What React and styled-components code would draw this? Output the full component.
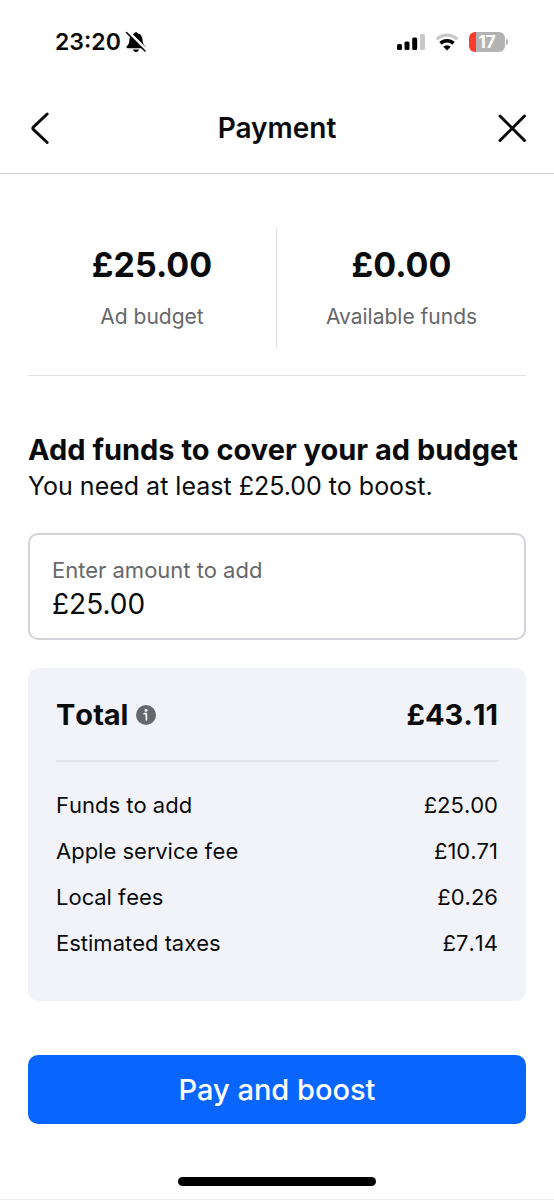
import { useState } from "react";
import styled, { createGlobalStyle } from "styled-components";

const GlobalStyle = createGlobalStyle`
  * {
    box-sizing: border-box;
  }
  body {
    margin: 0;
    background-color: #fff;
    color: #0a0b0c;
    font-family: Inter, "Liberation Sans", sans-serif;
  }
`;

const Container = styled.div`
  min-height: 100vh;
  display: flex;
  flex-direction: column;
  border-bottom: 1px solid #ececee;
`;

const StatusBar = styled.div`
  height: 83px;
  padding: 0 46px 0 55px;
  display: flex;
  align-items: center;
  justify-content: space-between;
`;

const StatusGroup = styled.div`
  display: flex;
  align-items: center;
  gap: ${(props) => props.gap};
`;

const Time = styled.span`
  font-size: 23px;
  font-weight: 600;
  line-height: 28px;
`;

const Battery = styled.div`
  display: flex;
  align-items: center;
  gap: 1px;
`;

const BatteryBody = styled.div`
  width: 36px;
  height: 20px;
  border-radius: 6px;
  background: linear-gradient(to right, #fb3b30 7px, #b3b3b3 7px);
  color: white;
  font-size: 17px;
  font-weight: 700;
  line-height: 20px;
  text-align: center;
`;

const BatteryCap = styled.div`
  width: 2px;
  height: 6px;
  border-radius: 0 2px 2px 0;
  background-color: #b3b3b3;
`;

const Header = styled.header`
  height: 91px;
  padding: 0 20px;
  display: flex;
  align-items: center;
  justify-content: space-between;
  border-bottom: 1px solid #cfd0d2;
`;

const IconButton = styled.button`
  width: 44px;
  height: 44px;
  padding: 0;
  display: flex;
  align-items: center;
  justify-content: center;
  border: none;
  background: none;
  color: inherit;
  cursor: pointer;
`;

const Title = styled.h1`
  margin: 0;
  font-size: 28px;
  font-weight: 600;
  line-height: 36px;
`;

const Wrapper = styled.main`
  flex: 1;
  padding: 54px 28px 0;
`;

const Balances = styled.div`
  display: grid;
  grid-template-columns: 1fr 1fr;
  padding-bottom: 27px;
  border-bottom: 1px solid #e0e1e3;
`;

const Balance = styled.div`
  height: 120px;
  display: flex;
  flex-direction: column;
  align-items: center;
  justify-content: center;
  gap: 18px;

  &:first-child {
    border-right: 1px solid #dedfe2;
  }
`;

const BalanceValue = styled.span`
  font-size: 34px;
  font-weight: 700;
  line-height: 40px;
`;

const BalanceLabel = styled.span`
  color: #65676b;
  font-size: 21px;
  line-height: 28px;
`;

const SectionTitle = styled.h2`
  margin: 56px 0 0;
  font-size: 29px;
  font-weight: 700;
  line-height: 36px;
`;

const SectionText = styled.p`
  margin: 0;
  font-size: 25px;
  line-height: 36px;
`;

const Field = styled.div`
  margin-top: 29px;
  padding: 21px 22px 16px;
  display: flex;
  flex-direction: column;
  gap: 2px;
  border: 2px solid #d2d3da;
  border-radius: 10px;
`;

const FieldLabel = styled.label`
  color: #65676b;
  font-size: 22px;
  line-height: 28px;
`;

const FieldInput = styled.input`
  width: 100%;
  height: 36px;
  padding: 0;
  border: none;
  outline: none;
  background: none;
  color: inherit;
  font-family: inherit;
  font-size: 28px;
`;

const Summary = styled.section`
  margin-top: 28px;
  padding: 29px 28px 35px;
  border-radius: 10px;
  background-color: #f2f3f8;
  font-kerning: none;
`;

const SummaryTotal = styled.div`
  padding-bottom: 27px;
  display: flex;
  align-items: center;
  justify-content: space-between;
  border-bottom: 2px solid #e3e5ea;
`;

const TotalLabel = styled.div`
  display: flex;
  align-items: center;
  gap: 8px;
`;

const TotalText = styled.span`
  font-size: 29px;
  font-weight: 700;
  line-height: 36px;
`;

const InfoButton = styled.button`
  padding: 0;
  display: flex;
  border: none;
  background: none;
  color: #65676b;
  cursor: pointer;
`;

const Fees = styled.table`
  width: 100%;
  margin-top: 20px;
  border-collapse: collapse;
  font-size: 22px;
  line-height: 46px;
`;

const FeeName = styled.th`
  padding: 0;
  font-weight: 400;
  text-align: left;
`;

const FeeAmount = styled.td`
  padding: 0;
  text-align: right;
`;

const Button = styled.button`
  width: 100%;
  height: 69px;
  margin-top: 54px;
  border: none;
  border-radius: 10px;
  background-color: #0866ff;
  color: white;
  font-family: inherit;
  font-size: 29px;
  font-weight: 500;
  cursor: pointer;
`;

const HomeIndicator = styled.div`
  width: 198px;
  height: 9px;
  margin: 24px auto 13px;
  border-radius: 5px;
  background-color: #000;
`;

const fees = [
  { name: "Funds to add", amount: "£25.00" },
  { name: "Apple service fee", amount: "£10.71" },
  { name: "Local fees", amount: "£0.26" },
  { name: "Estimated taxes", amount: "£7.14" },
];

const BellOff = () => (
  <svg width="22" height="22" viewBox="0 0 22 22" aria-hidden="true">
    <path
      d="M11 1.2c-1 0-1.700.6-1.900 1.400C6 3.300 4.500 6 4.400 9c-.1 3.400-.9 4.600-2.500 6.200-.9 1-.5 2 .8 2h16.600c1.300 0 1.700-1 .8-2C18.500 13.600 17.700 12.400 17.600 9c-.1-3-1.600-5.700-4.700-6.400-.2-.8-.9-1.400-1.900-1.400z"
      fill="#000"
    />
    <path d="M8 18.500h6c-.3 1.500-1.500 2.400-3 2.400s-2.700-.9-3-2.400z" fill="#000" />
    <path d="M3.200.7l18 18" stroke="#fff" strokeWidth="3" />
    <path
      d="M1.500 1.500l18.500 18.500"
      stroke="#000"
      strokeWidth="1.600"
      strokeLinecap="round"
    />
  </svg>
);

const Signal = () => (
  <svg width="28" height="18" viewBox="0 0 28 18" aria-hidden="true">
    <rect x="0" y="11" width="5" height="6" rx="1.500" fill="#000" />
    <rect x="7.500" y="8.500" width="5" height="8.500" rx="1.500" fill="#000" />
    <rect x="15.200" y="4.500" width="5" height="12.500" rx="1.500" fill="#000" />
    <rect x="23" y="1" width="5" height="16" rx="1.500" fill="#c8c8c8" />
  </svg>
);

const Wifi = () => (
  <svg width="24" height="18" viewBox="0 0 24 18" fill="none" aria-hidden="true">
    <path d="M1.800 6.300a14.600 14.600 0 0 1 20.400 0" stroke="#c8c8c8" strokeWidth="3.400" />
    <path d="M5.500 10.400a9.300 9.300 0 0 1 13 0" stroke="#000" strokeWidth="3.600" />
    <path d="M12 17.500l-3.700-3.700a5.300 5.300 0 0 1 7.400 0z" fill="#000" />
  </svg>
);

const BackIcon = () => (
  <svg width="44" height="44" viewBox="0 0 44 44" fill="none" aria-hidden="true">
    <path
      d="M27.200 8L13.600 20.800q-1.400 1.400 0 2.800L27.200 36.500"
      stroke="currentColor"
      strokeWidth="3"
      strokeLinecap="round"
    />
  </svg>
);

const CloseIcon = () => (
  <svg width="44" height="44" viewBox="0 0 44 44" fill="none" aria-hidden="true">
    <path
      d="M10 10l24.500 24.500M34.500 10L10 34.500"
      stroke="currentColor"
      strokeWidth="3"
      strokeLinecap="round"
    />
  </svg>
);

const InfoIcon = () => (
  <svg width="20" height="20" viewBox="0 0 20 20" fill="none" aria-hidden="true">
    <circle cx="10" cy="10" r="10" fill="currentColor" />
    <circle cx="10" cy="5.200" r="1.500" fill="#f2f3f8" />
    <path
      d="M8.200 8.700h2.200v6.100"
      stroke="#f2f3f8"
      strokeWidth="1.700"
      strokeLinecap="round"
      strokeLinejoin="round"
    />
  </svg>
);

const App = () => {
  const [amount, setAmount] = useState("£25.00");

  return (
    <Container>
      <GlobalStyle />
      <StatusBar>
        <StatusGroup gap="4px">
          <Time>23:20</Time>
          <BellOff />
        </StatusGroup>
        <StatusGroup gap="10px">
          <Signal />
          <Wifi />
          <Battery>
            <BatteryBody>17</BatteryBody>
            <BatteryCap />
          </Battery>
        </StatusGroup>
      </StatusBar>
      <Header>
        <IconButton type="button" aria-label="Back">
          <BackIcon />
        </IconButton>
        <Title>Payment</Title>
        <IconButton type="button" aria-label="Close">
          <CloseIcon />
        </IconButton>
      </Header>
      <Wrapper>
        <Balances>
          <Balance>
            <BalanceValue>£25.00</BalanceValue>
            <BalanceLabel>Ad budget</BalanceLabel>
          </Balance>
          <Balance>
            <BalanceValue>£0.00</BalanceValue>
            <BalanceLabel>Available funds</BalanceLabel>
          </Balance>
        </Balances>
        <SectionTitle>Add funds to cover your ad budget</SectionTitle>
        <SectionText>You need at least £25.00 to boost.</SectionText>
        <Field>
          <FieldLabel htmlFor="amount">Enter amount to add</FieldLabel>
          <FieldInput
            id="amount"
            type="text"
            inputMode="decimal"
            value={amount}
            onChange={(e) => setAmount(e.target.value)}
          />
        </Field>
        <Summary>
          <SummaryTotal>
            <TotalLabel>
              <TotalText>Total</TotalText>
              <InfoButton type="button" aria-label="About the total">
                <InfoIcon />
              </InfoButton>
            </TotalLabel>
            <TotalText>£43.11</TotalText>
          </SummaryTotal>
          <Fees>
            <tbody>
              {fees.map((fee) => (
                <tr key={fee.name}>
                  <FeeName scope="row">{fee.name}</FeeName>
                  <FeeAmount>{fee.amount}</FeeAmount>
                </tr>
              ))}
            </tbody>
          </Fees>
        </Summary>
        <Button type="button">Pay and boost</Button>
      </Wrapper>
      <HomeIndicator />
    </Container>
  );
};

export default App;
